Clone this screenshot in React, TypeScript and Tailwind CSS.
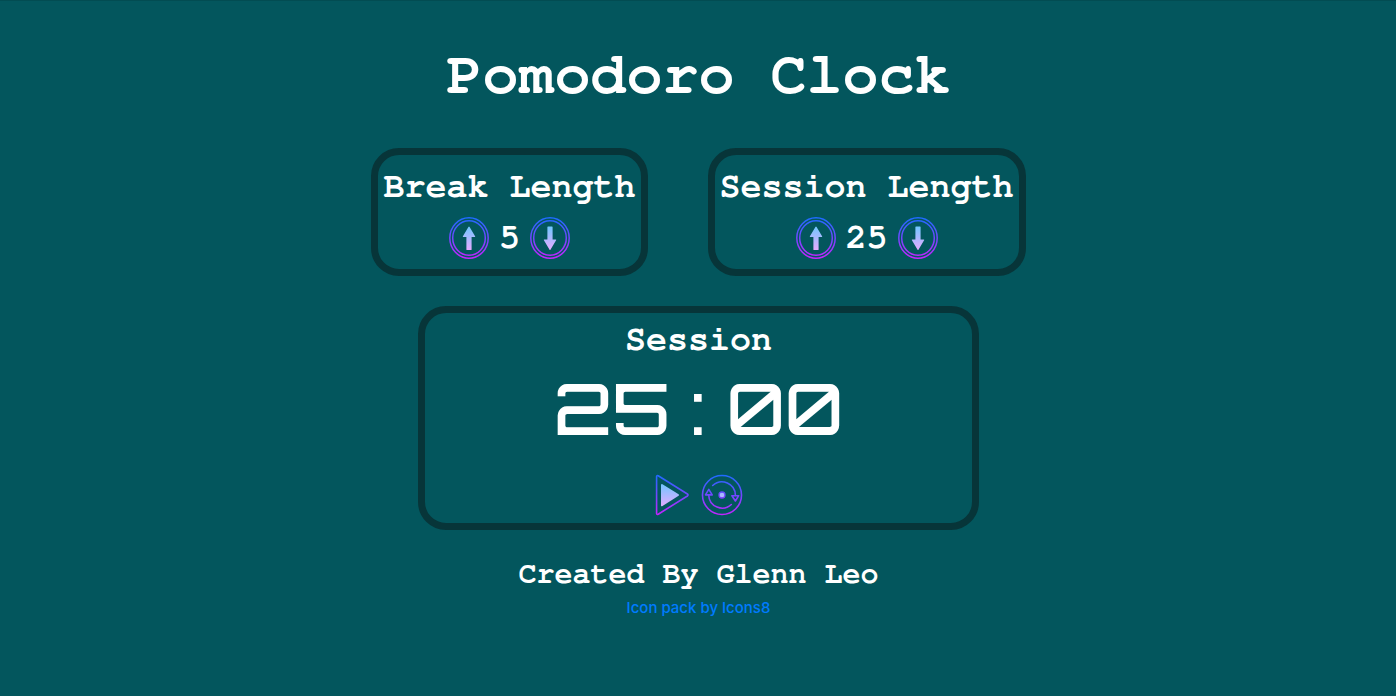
import { useEffect, useState } from "react";

const outline = "url(#outline)";
const solid = "url(#solid)";

function Gradients() {
  return (
    <svg width="0" height="0" className="absolute" aria-hidden="true">
      <defs>
        <linearGradient id="outline" gradientUnits="userSpaceOnUse" x1="0" y1="0" x2="0" y2="42">
          <stop offset="0" stopColor="#1a6dff" />
          <stop offset="1" stopColor="#c822ff" />
        </linearGradient>
        <linearGradient id="solid" gradientUnits="userSpaceOnUse" x1="0" y1="9" x2="0" y2="33">
          <stop offset="0" stopColor="#6dc7ff" />
          <stop offset="1" stopColor="#e6abff" />
        </linearGradient>
      </defs>
    </svg>
  );
}

function ArrowIcon({ down = false }: { down?: boolean }) {
  return (
    <svg width="40" height="42" viewBox="0 0 40 42" fill="none" aria-hidden="true">
      <ellipse cx="20" cy="21" rx="19.2" ry="20.2" stroke={outline} strokeWidth="1.5" />
      <ellipse cx="20" cy="21" rx="16.3" ry="17.2" stroke={outline} strokeWidth="1.5" />
      <path
        fill={solid}
        d={
          down
            ? "M18 9.5h4q.6 0 .6.6V22.4h3.2q.7.1.3.8L20.6 32.4q-.6 1-1.2 0L13.9 23.2q-.4-.7.3-.8h3.2V10.1q0-.6.6-.6Z"
            : "M18 33h4q.6 0 .6-.6V20.1h3.2q.7-.1.3-.8L20.6 10.1q-.6-1-1.2 0L13.9 19.3q-.4.7.3.8h3.2V32.4q0 .6.6.6Z"
        }
      />
    </svg>
  );
}

function PlayIcon() {
  return (
    <svg width="34" height="42" viewBox="0 0 34 42" fill="none" aria-hidden="true">
      <path
        d="M1.6 2.6v36.8q.2 1.5 1.6.8L32.4 22q1.3-1 0-2L3.2 1.8q-1.4-.7-1.6.8Z"
        stroke={outline}
        strokeWidth="1.6"
        strokeLinejoin="round"
      />
      <path d="M6 11v20.4q.2 1.3 1.5.7L23.6 21.8q.9-.8 0-1.6L7.5 10.2Q6.2 9.5 6 11Z" fill={solid} />
    </svg>
  );
}

function ResetIcon() {
  return (
    <svg width="42" height="42" viewBox="0 0 42 42" fill="none" aria-hidden="true">
      <g stroke={outline} strokeWidth="1.6" strokeLinecap="round" strokeLinejoin="round">
        <circle cx="21" cy="21" r="19.5" />
        <path d="M11.7 11.5A13.5 13.5 0 0 1 34.4 21.5" />
        <path d="M30.3 30.5A13.5 13.5 0 0 1 7.7 21.2" />
        <path d="M30.9 21.7h6.8l-3.3 5.3Z" />
        <path d="M4.5 20.9h6.7L7.8 15.4Z" />
      </g>
      <circle cx="21" cy="21" r="3" fill={solid} stroke={outline} strokeWidth="1.3" />
    </svg>
  );
}

interface LengthCardProps {
  title: string;
  value: number;
  onChange: (value: number) => void;
}

function LengthCard({ title, value, onChange }: LengthCardProps) {
  return (
    <section className="rounded-[28px] border-7 border-[#073539] px-[5px] pt-3 pb-2.5">
      <h2 className="text-[35px] leading-10">{title}</h2>
      <div className="mt-2.5 flex items-center justify-center gap-2.5">
        <button type="button" aria-label={`Increase ${title}`} onClick={() => onChange(Math.min(60, value + 1))}>
          <ArrowIcon />
        </button>
        <span className="text-[35px] leading-10">{value}</span>
        <button type="button" aria-label={`Decrease ${title}`} onClick={() => onChange(Math.max(1, value - 1))}>
          <ArrowIcon down />
        </button>
      </div>
    </section>
  );
}

const pad = (n: number) => String(n).padStart(2, "0");

export default function App() {
  const [breakLength, setBreakLength] = useState(5);
  const [sessionLength, setSessionLength] = useState(25);
  const [phase, setPhase] = useState<"Session" | "Break">("Session");
  const [seconds, setSeconds] = useState(25 * 60);
  const [running, setRunning] = useState(false);

  useEffect(() => {
    if (!running) return;
    const timer = setTimeout(() => {
      if (seconds > 0) {
        setSeconds(seconds - 1);
      } else {
        setSeconds((phase === "Session" ? breakLength : sessionLength) * 60);
        setPhase(phase === "Session" ? "Break" : "Session");
      }
    }, 1000);
    return () => clearTimeout(timer);
  }, [running, seconds, phase, breakLength, sessionLength]);

  const changeLength = (name: "Session" | "Break", value: number) => {
    if (running) return;
    (name === "Session" ? setSessionLength : setBreakLength)(value);
    if (name === phase) setSeconds(value * 60);
  };

  const reset = () => {
    setRunning(false);
    setBreakLength(5);
    setSessionLength(25);
    setPhase("Session");
    setSeconds(25 * 60);
  };

  return (
    <main className="flex min-h-screen flex-col items-center border-t border-[#024c52] bg-[#03565d] pt-[38px] pr-4 pl-[17px] text-center font-['FreeMono','Courier_Prime','Liberation_Mono',monospace] font-bold text-white">
      <Gradients />
      <h1 className="text-[60px] leading-[72px]">Pomodoro Clock</h1>
      <div className="mt-[37px] flex flex-wrap justify-center gap-x-[60px] gap-y-[30px]">
        <LengthCard title="Break Length" value={breakLength} onChange={(v) => changeLength("Break", v)} />
        <LengthCard title="Session Length" value={sessionLength} onChange={(v) => changeLength("Session", v)} />
      </div>
      <section className="mt-[30px] w-full max-w-[561px] rounded-[28px] border-7 border-[#073539] pt-[7px] pb-1.5">
        <h2 className="text-[35px] leading-10">{phase}</h2>
        <p className="mt-2 font-['Orbitron','Inter',sans-serif] text-[70px] leading-[80px] font-medium slashed-zero">
          {pad(Math.floor(seconds / 60))} : {pad(seconds % 60)}
        </p>
        <div className="mt-[26px] mb-px flex items-center justify-center gap-3">
          <button type="button" aria-label="Start or pause" onClick={() => setRunning(!running)}>
            <PlayIcon />
          </button>
          <button type="button" aria-label="Reset" onClick={reset}>
            <ResetIcon />
          </button>
        </div>
      </section>
      <p className="mt-[26px] text-[30px] leading-9">Created By Glenn Leo</p>
      <a href="https://icons8.com/" className="mt-1 font-['Inter',sans-serif] text-[15px] leading-6 font-medium text-[#007bff]">
        Icon pack by Icons8
      </a>
    </main>
  );
}
